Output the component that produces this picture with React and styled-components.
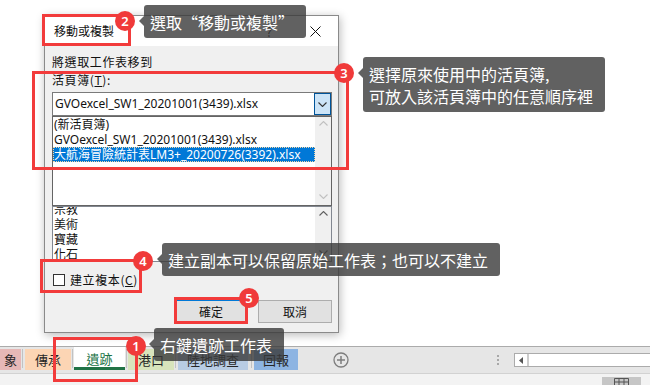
import React from 'react';
import styled, { createGlobalStyle } from 'styled-components';

const UI_FONT = `"Noto Sans", "Noto Sans CJK TC", sans-serif`;
const CJK_FONT = `"Noto Sans CJK TC", sans-serif`;

const GlobalStyle = createGlobalStyle`
  html, body {
    margin: 0;
    padding: 0;
    width: 650px;
    height: 385px;
    overflow: hidden;
    background: #fff;
  }
  * {
    box-sizing: border-box;
  }
`;

const Page = styled.div`
  position: relative;
  width: 650px;
  height: 385px;
  display: flex;
  flex-direction: column;
  overflow: hidden;
  font-family: ${UI_FONT};
  color: #111;
`;

const Sheet = styled.div`
  height: 346px;
  flex: none;
  background: #fff;
`;

/* ---------- sheet tabs ---------- */

const TabBar = styled.div`
  height: 27px;
  flex: none;
  display: flex;
  align-items: center;
  border-top: 1px solid #ababab;
  background: #e6e6e6;
`;

const TabStrip = styled.div`
  align-self: stretch;
  display: flex;
  align-items: flex-end;
  padding-bottom: 3px;
`;

const Tab = styled.div`
  width: ${p => p.$w}px;
  height: ${p => (p.$active ? 23 : 21)}px;
  margin-left: ${p => p.$ml || 0}px;
  display: flex;
  align-items: center;
  justify-content: center;
  background: ${p => p.$bg};
  color: ${p => (p.$active ? '#217346' : '#262626')};
  font-family: ${CJK_FONT};
  font-size: 13px;
  line-height: 16px;
  border-bottom: ${p => (p.$active ? '3px solid #217346' : 'none')};
  padding-top: ${p => (p.$active ? 3 : 0)}px;
`;

const TabSep = styled.div`
  width: 1px;
  height: 19px;
  margin: 0 ${p => p.$r || 2}px 0 ${p => p.$l || 1}px;
  align-self: center;
  background: #c2c2c2;
`;

const AddSheet = styled.div`
  margin-left: 35px;
  width: 16px;
  height: 16px;
  display: flex;
`;

const ScrollGroup = styled.div`
  margin-left: auto;
  display: flex;
  align-items: center;
`;

const Grip = styled.div`
  width: 3px;
  display: flex;
  flex-direction: column;
  gap: 2px;
  margin-right: 14px;

  span {
    width: 2px;
    height: 2px;
    background: #a8a8a8;
  }
`;

const HScroll = styled.div`
  width: 136px;
  height: 14px;
  display: flex;
  border: 1px solid #ababab;
  border-right: none;
  background: #fff;
`;

const HScrollBtn = styled.div`
  width: 14px;
  display: flex;
  align-items: center;
  justify-content: center;
  border-right: 2px solid #cdcdcd;
`;

const StatusBar = styled.div`
  height: 12px;
  flex: none;
  display: flex;
  justify-content: flex-end;
  align-items: flex-end;
  border-top: 1px solid #d2d2d2;
  background: #f3f3f3;
  padding-right: 9px;
`;

const ViewBtn = styled.div`
  width: 39px;
  height: 8px;
  display: flex;
  justify-content: center;
  align-items: flex-end;
  background: #c6c6c6;
`;

/* ---------- dialog ---------- */

const Dialog = styled.div`
  position: absolute;
  left: 44px;
  top: 15px;
  width: 295px;
  height: 318px;
  display: flex;
  flex-direction: column;
  border: 1px solid #8a8a8a;
  box-shadow: 1px 2px 9px rgba(0, 0, 0, 0.28);
  font-size: 12px;
`;

const TitleBar = styled.div`
  height: 30px;
  flex: none;
  display: flex;
  align-items: center;
  padding-left: 9px;
  background: #fff;
  font-family: ${CJK_FONT};
`;

const TitleText = styled.div`
  flex: 1;
  line-height: 16px;
`;

const TitleBtn = styled.div`
  width: 46px;
  height: 30px;
  display: flex;
  align-items: center;
  justify-content: center;
  font-size: 13px;
  color: #222;
`;

const Body = styled.div`
  flex: 1;
  display: flex;
  flex-direction: column;
  padding: 8px 6px 0 7px;
  background: #f0f0f0;
`;

const Label = styled.div`
  line-height: 16px;
  margin-top: ${p => p.$mt || 0}px;
  font-family: ${CJK_FONT};
  letter-spacing: 0.6px;
`;

const Combo = styled.div`
  margin-top: 4px;
  height: 24px;
  display: flex;
  border: 1px solid #7a7a7a;
  background: #fff;
`;

const ComboText = styled.div`
  flex: 1;
  padding-left: 2px;
  line-height: 22px;
`;

const ComboBtn = styled.div`
  width: 17px;
  display: flex;
  align-items: center;
  justify-content: center;
  border: 1px solid #005499;
  background: #cce4f7;
`;

const ListBox = styled.div`
  height: ${p => p.$h}px;
  flex: none;
  display: flex;
  overflow: hidden;
  border: 1px solid ${p => p.$border};
  background: #fff;
`;

const ListItems = styled.div`
  flex: 1;
  margin-top: ${p => p.$offset || 0}px;
`;

const Item = styled.div`
  height: 15px;
  line-height: 15px;
  padding-left: 1px;
  white-space: nowrap;
  font-family: ${UI_FONT};
  background: ${p => (p.$selected ? '#0078d7' : 'transparent')};
  color: ${p => (p.$selected ? '#fff' : '#111')};
  outline: ${p => (p.$selected ? '1px dotted #f3d7a6' : 'none')};
  outline-offset: -1px;
`;

const VScroll = styled.div`
  width: 16px;
  display: flex;
  flex-direction: column;
  justify-content: space-between;
  align-items: center;
  padding: 4px 0 6px;
  background: #f0f0f0;
`;

const CheckRow = styled.div`
  margin-top: 11px;
  height: 13px;
  display: flex;
  align-items: center;
  padding-left: 1px;
`;

const CheckBox = styled.div`
  width: 12px;
  height: 12px;
  border: 1px solid #333;
  background: #fff;
`;

const CheckLabel = styled.div`
  margin-left: 5px;
  line-height: 13px;
  font-family: ${CJK_FONT};
  letter-spacing: 0.6px;
`;

const Buttons = styled.div`
  margin-top: 14px;
  display: flex;
  justify-content: flex-end;
  gap: 10px;
`;

const Button = styled.div`
  width: 74px;
  height: 23px;
  display: flex;
  align-items: center;
  justify-content: center;
  border: 1px solid ${p => (p.$default ? '#0078d7' : '#adadad')};
  background: #e1e1e1;
  font-family: ${CJK_FONT};
  line-height: 14px;
`;

/* ---------- annotations ---------- */

const RedBox = styled.div`
  position: absolute;
  left: ${p => p.$x}px;
  top: ${p => p.$y}px;
  width: ${p => p.$w}px;
  height: ${p => p.$h}px;
  border: 3px solid #f23b3b;
`;

const Badge = styled.div`
  position: absolute;
  left: ${p => p.$x - 10}px;
  top: ${p => p.$y - 10}px;
  width: 20px;
  height: 20px;
  border-radius: 50%;
  display: flex;
  align-items: center;
  justify-content: center;
  background: #f03a3a;
  color: #fff;
  font-family: "Noto Sans", sans-serif;
  font-weight: 600;
  font-size: 13px;
  line-height: 1;
`;

const Tip = styled.div`
  position: absolute;
  left: ${p => p.$x}px;
  top: ${p => p.$y}px;
  padding: 5.5px 12px 5.5px 6px;
  border-radius: 3px;
  background: rgba(58, 58, 58, 0.8);
  color: #fff;
  font-family: ${CJK_FONT};
  font-size: 16px;
  line-height: 22px;
  white-space: nowrap;

  &::before {
    content: '';
    position: absolute;
    left: -5px;
    top: 11px;
    border-top: 5px solid transparent;
    border-bottom: 5px solid transparent;
    border-right: 5px solid rgba(58, 58, 58, 0.8);
  }
`;

const Chevron = ({ up, color = '#333' }) => (
  <svg width="9" height="5" viewBox="0 0 9 5">
    <path
      d={up ? 'M0.5 4.5 L4.5 0.5 L8.5 4.5' : 'M0.5 0.5 L4.5 4.5 L8.5 0.5'}
      fill="none"
      stroke={color}
      strokeWidth="1.1"
    />
  </svg>
);

const tabs = [
  { name: '象', w: 21, bg: '#e6b8b7' },
  { name: '傳承', w: 46, bg: '#fcd5b4' },
  { name: '遺跡', w: 51, bg: '#fff', active: true },
  { name: '港口', w: 46, bg: '#d8e4bc' },
  { name: '陸地調查', w: 70, bg: '#b8cce4' },
  { name: '回報', w: 44, bg: '#8db4e2' },
];

export default function App() {
  return (
    <Page>
      <GlobalStyle />
      <Sheet />

      <TabBar>
        <TabStrip>
          {tabs.map((t, i) => (
            <React.Fragment key={t.name}>
              {i > 0 && !t.active && !tabs[i - 1].active && <TabSep $l={i === 5 ? 3 : 1} />}
              {(t.active || (i > 0 && tabs[i - 1].active)) && <TabSep $l={0} $r={1} />}
              <Tab $w={t.w} $bg={t.bg} $active={t.active}>
                {t.name}
              </Tab>
            </React.Fragment>
          ))}
        </TabStrip>
        <AddSheet>
          <svg width="16" height="16" viewBox="0 0 16 16">
            <circle cx="8" cy="8" r="7" fill="none" stroke="#7d7d7d" strokeWidth="1.3" />
            <path d="M8 4 V12 M4 8 H12" stroke="#7d7d7d" strokeWidth="1.5" />
          </svg>
        </AddSheet>
        <ScrollGroup>
          <Grip>
            <span />
            <span />
            <span />
          </Grip>
          <HScroll>
            <HScrollBtn>
              <svg width="4" height="7" viewBox="0 0 4 7">
                <path d="M4 0 L0 3.5 L4 7 Z" fill="#555" />
              </svg>
            </HScrollBtn>
          </HScroll>
        </ScrollGroup>
      </TabBar>

      <StatusBar>
        <ViewBtn>
          <svg width="15" height="7" viewBox="0 0 15 7">
            <path d="M0.5 7 V0.5 H14.5 V7 M5 0.5 V7 M10 0.5 V7 M0.5 4 H14.5" fill="none" stroke="#555" />
          </svg>
        </ViewBtn>
      </StatusBar>

      <Dialog>
        <TitleBar>
          <TitleText>移動或複製</TitleText>
          <TitleBtn>?</TitleBtn>
          <TitleBtn>
            <svg width="11" height="11" viewBox="0 0 11 11">
              <path d="M0.5 0.5 L10.5 10.5 M10.5 0.5 L0.5 10.5" stroke="#111" strokeWidth="1" />
            </svg>
          </TitleBtn>
        </TitleBar>
        <Body>
          <Label>將選取工作表移到</Label>
          <Label $mt={2}>
            活頁簿(<u>T</u>):
          </Label>
          <Combo>
            <ComboText>GVOexcel_SW1_20201001(3439).xlsx</ComboText>
            <ComboBtn>
              <Chevron />
            </ComboBtn>
          </Combo>
          <ListBox $h={90} $border="#646464">
            <ListItems $offset={0}>
              <Item>(新活頁簿)</Item>
              <Item>GVOexcel_SW1_20201001(3439).xlsx</Item>
              <Item $selected>大航海冒險統計表LM3+_20200726(3392).xlsx</Item>
            </ListItems>
            <VScroll>
              <Chevron up color="#c0c0c0" />
              <Chevron color="#c0c0c0" />
            </VScroll>
          </ListBox>
          <ListBox $h={56} $border="#828790">
            <ListItems $offset={-5}>
              <Item>宗教</Item>
              <Item>美術</Item>
              <Item>寶藏</Item>
              <Item>化石</Item>
            </ListItems>
            <VScroll>
              <Chevron up color="#606060" />
              <Chevron color="#606060" />
            </VScroll>
          </ListBox>
          <CheckRow>
            <CheckBox />
            <CheckLabel>
              建立複本(<u>C</u>)
            </CheckLabel>
          </CheckRow>
          <Buttons>
            <Button $default>確定</Button>
            <Button>取消</Button>
          </Buttons>
        </Body>
      </Dialog>

      <RedBox $x={42} $y={14} $w={89} $h={32} />
      <RedBox $x={32} $y={71} $w={317} $h={99} />
      <RedBox $x={40} $y={259} $w={102} $h={34} />
      <RedBox $x={174} $y={297} $w={74} $h={27} />
      <RedBox $x={53} $y={337} $w={85} $h={45} />

      <Tip $x={144} $y={5}>選取“移動或複製”</Tip>
      <Tip $x={363} $y={57}>
        選擇原來使用中的活頁簿,
        <br />
        可放入該活頁簿中的任意順序裡
      </Tip>
      <Tip $x={162} $y={243}>建立副本可以保留原始工作表；也可以不建立</Tip>
      <Tip $x={154} $y={328}>右鍵遺跡工作表</Tip>

      <Badge $x={125} $y={21}>2</Badge>
      <Badge $x={344} $y={73}>3</Badge>
      <Badge $x={143} $y={261}>4</Badge>
      <Badge $x={249} $y={298}>5</Badge>
      <Badge $x={136} $y={346}>1</Badge>
    </Page>
  );
}
